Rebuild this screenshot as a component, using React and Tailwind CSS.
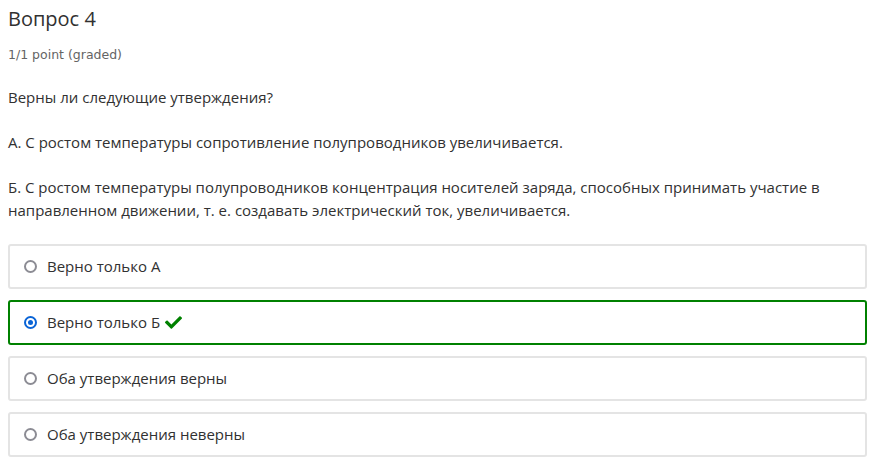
import { useState } from "react";
import { FaCheck } from "react-icons/fa";

const options = [
    { id: "a", label: "Верно только А" },
    { id: "b", label: "Верно только Б" },
    { id: "c", label: "Оба утверждения верны" },
    { id: "d", label: "Оба утверждения неверны" },
];

export default function App() {
    const [selected, setSelected] = useState("b");

    return (
        <div className="bg-white min-h-screen px-2 pt-[5px] text-[#313131]" style={{ fontFamily: '"Open Sans", sans-serif' }}>
            <h3 className="text-[20px] leading-[28px] text-[#313131]">Вопрос 4</h3>
            <div className="mt-[13px] text-[12.5px] leading-[18px] text-[#646464]" style={{ fontFamily: '"DejaVu Sans", sans-serif' }}>1/1 point (graded)</div>

            <div className="mt-[22px] text-[15px] leading-[22.5px] space-y-[22.5px]">
                <p>Верны ли следующие утверждения?</p>
                <p>А. С ростом температуры сопротивление полупроводников увеличивается.</p>
                <p>
                    Б. С ростом температуры полупроводников концентрация носителей заряда, способных принимать участие в
                    направленном движении, т. е. создавать электрический ток, увеличивается.
                </p>
            </div>

            <div className="mt-[23px] flex flex-col gap-[11px]">
                {options.map(opt => {
                    const isSel = selected === opt.id;
                    return (
                        <label
                            key={opt.id}
                            className={`flex items-center h-[45px] pl-[14px] rounded-[3px] border-2 cursor-pointer ${isSel ? "border-[#008100]" : "border-[#e4e4e4]"}`}
                        >
                            <span className={`w-[13px] h-[13px] rounded-full border-2 flex items-center justify-center ${isSel ? "border-[#0a64d6]" : "border-[#8c8c94]"}`}>
                                {isSel && <span className="w-[5px] h-[5px] rounded-full bg-[#0a64d6]" />}
                            </span>
                            <input type="radio" name="q4" className="hidden" checked={isSel} onChange={() => setSelected(opt.id)} />
                            <span className="ml-[10px] text-[15px] text-[#313131]">{opt.label}</span>
                            {isSel && <FaCheck className="ml-[5px] text-[#008100]" size={17} />}
                        </label>
                    );
                })}
            </div>
        </div>
    );
}
